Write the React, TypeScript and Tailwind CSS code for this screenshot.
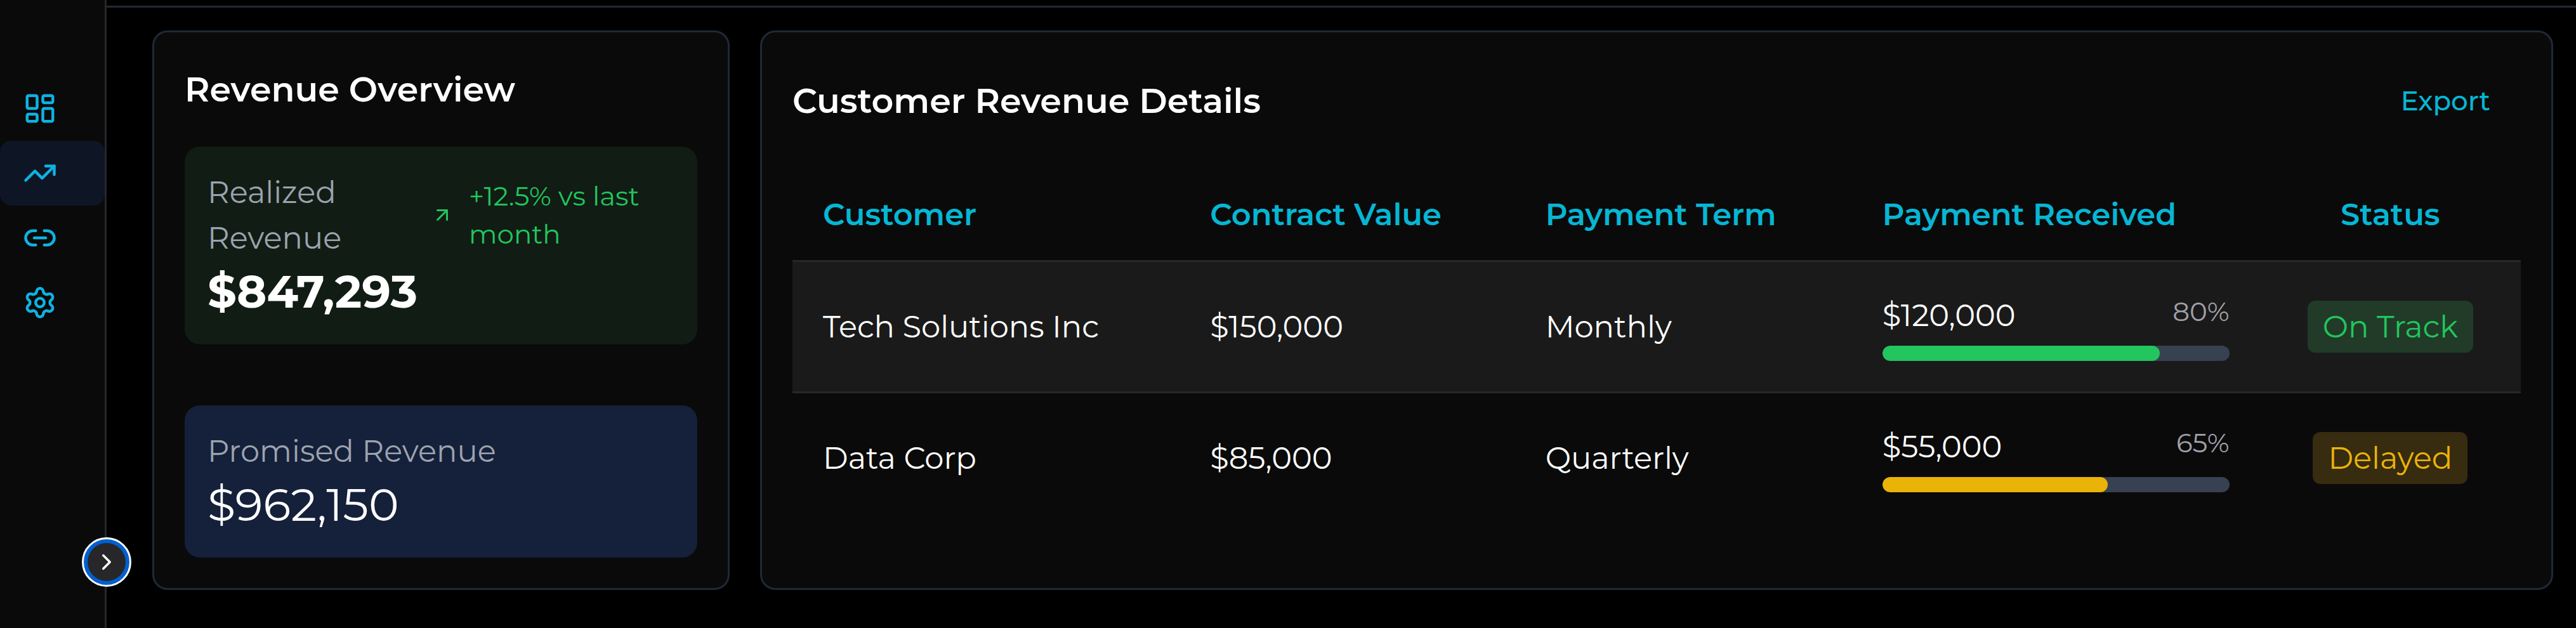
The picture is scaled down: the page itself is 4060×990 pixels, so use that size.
import React from "react";
import {
  ArrowUpRight,
  ChevronRight,
  LayoutDashboard,
  Link2,
  Settings,
  TrendingUp,
  type LucideIcon,
} from "lucide-react";

type NavItem = { label: string; icon: LucideIcon; active?: boolean };

const navItems: NavItem[] = [
  { label: "Dashboard", icon: LayoutDashboard },
  { label: "Revenue", icon: TrendingUp, active: true },
  { label: "Integrations", icon: Link2 },
  { label: "Settings", icon: Settings },
];

type Row = {
  customer: string;
  contract: string;
  term: string;
  received: string;
  percent: number;
  status: string;
  bar: string;
  badge: string;
};

const rows: Row[] = [
  {
    customer: "Tech Solutions Inc",
    contract: "$150,000",
    term: "Monthly",
    received: "$120,000",
    percent: 80,
    status: "On Track",
    bar: "bg-[#22c55e]",
    badge: "bg-[#213b28] text-[#22c55e]",
  },
  {
    customer: "Data Corp",
    contract: "$85,000",
    term: "Quarterly",
    received: "$55,000",
    percent: 65,
    status: "Delayed",
    bar: "bg-[#eab308]",
    badge: "bg-[#372b10] text-[#eab308]",
  },
];

function Sidebar() {
  return (
    <aside className="relative w-[168px] shrink-0 border-r-3 border-[#27272a] bg-[#0a0a0a] pt-[120px]">
      <nav className="flex flex-col">
        {navItems.map(({ label, icon: Icon, active }) => (
          <a
            key={label}
            href="#"
            aria-label={label}
            className={
              active
                ? "flex rounded-[18px] bg-[#0e1626] px-9 py-6 text-[#0eb2e2]"
                : "flex rounded-[18px] px-9 py-6 text-[#0eb2e2]"
            }
          >
            <Icon className="size-[54px]" strokeWidth={2} />
          </a>
        ))}
      </nav>
      <button
        type="button"
        aria-label="Expand sidebar"
        className="absolute -right-[42px] bottom-[65px] flex size-[78px] items-center justify-center rounded-full border-3 border-white bg-[#0060d0]"
      >
        <span className="flex size-[60px] items-center justify-center rounded-full bg-[#27272a]">
          <ChevronRight className="size-[42px] text-white" strokeWidth={2} />
        </span>
      </button>
    </aside>
  );
}

function RevenueOverview() {
  return (
    <section className="flex flex-col rounded-3xl border-3 border-[#1f2937] bg-[#0a0a0a] p-12">
      <h2 className="text-[54px] leading-[84px] font-semibold text-white">Revenue Overview</h2>
      <div className="mt-12 rounded-3xl bg-[#111c14] p-9">
        <div className="flex items-center justify-between gap-12">
          <p className="w-[240px] text-[48px] leading-[72px] text-[#9ca3af]">Realized Revenue</p>
          <div className="flex w-[384px] items-center gap-6 text-[#22c55e]">
            <ArrowUpRight className="size-9 shrink-0" />
            <span className="text-[42px] leading-[60px]">+12.5% vs last month</span>
          </div>
        </div>
        <p className="text-[72px] leading-[96px] font-bold text-white">$847,293</p>
      </div>
      <div className="mt-24 rounded-3xl bg-[#15203a] p-9">
        <p className="text-[48px] leading-[72px] text-[#9ca3af]">Promised Revenue</p>
        <p className="text-[72px] leading-[96px] text-white">$962,150</p>
      </div>
    </section>
  );
}

function PaymentProgress({ row }: { row: Row }) {
  return (
    <div className="flex flex-col gap-3">
      <div className="flex items-start justify-between">
        <span>{row.received}</span>
        <span className="text-[42px] leading-[60px] text-[#a1a1aa]">{row.percent}%</span>
      </div>
      <div className="h-6 overflow-hidden rounded-full bg-[#374151]">
        <div className={`h-full rounded-full ${row.bar}`} style={{ width: `${row.percent}%` }} />
      </div>
    </div>
  );
}

function CustomerTable() {
  return (
    <table className="w-full table-fixed border-separate border-spacing-0 text-[48px] leading-[72px]">
      <colgroup>
        <col className="w-[22.4%]" />
        <col className="w-[19.4%]" />
        <col className="w-[19.5%]" />
        <col className="w-[23.6%]" />
        <col className="w-[15.1%]" />
      </colgroup>
      <thead>
        <tr className="text-left text-[#06b6d4]">
          {["Customer", "Contract Value", "Payment Term", "Payment Received"].map((h) => (
            <th key={h} scope="col" className="border-b-3 border-[#27272a] px-12 pt-[35px] pb-9 font-semibold">
              {h}
            </th>
          ))}
          <th scope="col" className="border-b-3 border-[#27272a] px-12 pt-[35px] pb-9 text-center font-semibold">
            Status
          </th>
        </tr>
      </thead>
      <tbody className="text-white">
        {rows.map((row) => (
          <tr key={row.customer} className="group odd:bg-[#1a1a1a]">
            <td className="border-[#27272a] px-12 py-12 group-odd:border-b-3">{row.customer}</td>
            <td className="border-[#27272a] px-12 py-12 group-odd:border-b-3">{row.contract}</td>
            <td className="border-[#27272a] px-12 py-12 group-odd:border-b-3">{row.term}</td>
            <td className="border-[#27272a] px-12 py-12 group-odd:border-b-3">
              <PaymentProgress row={row} />
            </td>
            <td className="border-[#27272a] px-12 py-12 text-center group-odd:border-b-3">
              <span className={`rounded-xl px-6 py-3 ${row.badge}`}>{row.status}</span>
            </td>
          </tr>
        ))}
      </tbody>
    </table>
  );
}

function CustomerDetails() {
  return (
    <section className="col-span-3 flex flex-col rounded-3xl border-3 border-[#1f2937] bg-[#0a0a0a] p-12">
      <div className="mb-12 flex items-center justify-between">
        <h2 className="text-[54px] leading-[84px] font-semibold text-white">Customer Revenue Details</h2>
        <button type="button" className="h-[120px] px-12 text-[42px] leading-[60px] font-medium text-[#06b6d4]">
          Export
        </button>
      </div>
      <CustomerTable />
    </section>
  );
}

export default function App() {
  return (
    <div className="flex min-h-screen bg-black font-['Montserrat','Inter',sans-serif]">
      <Sidebar />
      <div className="flex min-w-0 flex-1 flex-col">
        <header className="h-3 border-b-3 border-[#242936]" />
        <main className="grid grid-cols-4 gap-12 py-9 pr-9 pl-[72px]">
          <RevenueOverview />
          <CustomerDetails />
        </main>
      </div>
    </div>
  );
}
